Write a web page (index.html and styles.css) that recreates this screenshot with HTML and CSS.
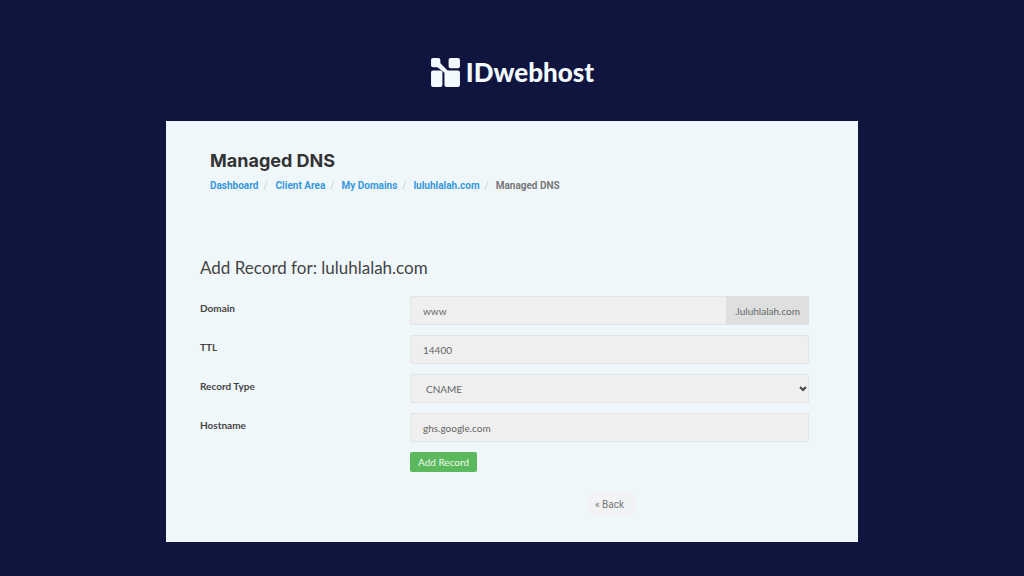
FILE: index.html
```html
<!DOCTYPE html>
<html lang="en">
<head>
<meta charset="utf-8">
<meta name="viewport" content="width=device-width, initial-scale=1">
<title>Managed DNS - IDwebhost</title>
<link rel="stylesheet" href="styles.css">
</head>
<body>
<header class="brand">
  <svg class="brand-mark" viewBox="0 0 30 30" aria-hidden="true">
    <rect x="1" y="1" width="9" height="9" rx="2"/>
    <rect x="18" y="1" width="11" height="10" rx="2"/>
    <rect x="1" y="13" width="11" height="16" rx="2"/>
    <rect x="14" y="13" width="15" height="16" rx="2"/>
    <path d="M6 9l3-4 9 9-3 2z"/>
  </svg>
  <span class="brand-name">IDwebhost</span>
</header>
<main class="panel">
  <div class="heading">
    <h1 class="title">Managed DNS</h1>
    <nav aria-label="Breadcrumb">
      <ol class="crumbs">
        <li><a href="#">Dashboard</a></li>
        <li><a href="#">Client Area</a></li>
        <li><a href="#">My Domains</a></li>
        <li><a href="#">luluhlalah.com</a></li>
        <li aria-current="page">Managed DNS</li>
      </ol>
    </nav>
  </div>
  <h2 class="subtitle">Add Record for: luluhlalah.com</h2>
  <form class="record-form">
    <div class="row">
      <label for="domain">Domain</label>
      <div class="group">
        <input class="field" id="domain" type="text" value="www">
        <span class="suffix">.luluhlalah.com</span>
      </div>
    </div>
    <div class="row">
      <label for="ttl">TTL</label>
      <input class="field" id="ttl" type="text" value="14400">
    </div>
    <div class="row">
      <label for="type">Record Type</label>
      <div class="select-wrap">
        <select class="field" id="type"><option>CNAME</option></select>
        <svg class="chevron" viewBox="0 0 8 6" aria-hidden="true"><path d="M1 1l3 3 3-3"/></svg>
      </div>
    </div>
    <div class="row">
      <label for="host">Hostname</label>
      <input class="field" id="host" type="text" value="ghs.google.com">
    </div>
    <div class="submit"><button class="add" type="submit">Add Record</button></div>
    <div class="actions"><button class="back" type="button">« Back</button></div>
  </form>
</main>
</body>
</html>
```
FILE: styles.css
```css
* {
  box-sizing: border-box;
}

body {
  margin: 0;
  min-height: 100vh;
  padding: 57px 16px 34px;
  background: #101540;
  color: #444;
  font-family: Lato, sans-serif;
  font-size: 10px;
}

.brand {
  display: flex;
  align-items: center;
  justify-content: center;
  gap: 5px;
  height: 30px;
  margin-bottom: 34px;
  color: #f3fafd;
}

.brand-mark {
  width: 31px;
  height: 31px;
  fill: #f3fafd;
}

.brand-name {
  font-size: 26px;
  font-weight: 900;
  line-height: 30px;
}

.panel {
  max-width: 692px;
  margin: 0 auto;
  padding: 28px 49px 26px 34px;
  background: #f0f7fb;
}

.heading {
  padding-left: 10px;
}

.title {
  margin: 0 0 6px;
  color: #333;
  font-family: Inter, sans-serif;
  font-size: 18px;
  font-weight: 700;
  line-height: 23px;
}

.crumbs {
  display: flex;
  flex-wrap: wrap;
  margin: 0;
  padding: 0;
  list-style: none;
  color: #777;
  font-family: Roboto, sans-serif;
  font-weight: 700;
  line-height: 16px;
}

.crumbs li + li::before {
  content: "/";
  padding: 0 8px 0 5px;
  color: #ccc;
  font-weight: 400;
}

.crumbs li:nth-child(n + 3)::before {
  padding-right: 7px;
}

.crumbs a {
  color: #3798dc;
  text-decoration: none;
}

.subtitle {
  margin: 64px 0 18px;
  font-size: 17px;
  font-weight: 400;
  line-height: 20px;
}

.record-form {
  display: flex;
  flex-direction: column;
  gap: 10px;
}

.row {
  display: grid;
  grid-template-columns: 210px 1fr;
}

.row label {
  padding-top: 6px;
  font-weight: 700;
  line-height: 13px;
}

.group {
  display: flex;
}

.select-wrap {
  position: relative;
}

.field {
  display: block;
  width: 100%;
  min-width: 0;
  height: 29px;
  padding: 0 12px;
  border: 1px solid #e2e5e6;
  border-radius: 2px;
  background: #efefef;
  color: #666;
  font: inherit;
  appearance: none;
}

select.field {
  padding-left: 15px;
}

.group .field {
  flex: 1;
  border-right: 0;
  border-radius: 2px 0 0 2px;
}

.suffix {
  display: flex;
  align-items: center;
  padding: 0 9px;
  background: #dedfdf;
  color: #666;
}

.chevron {
  position: absolute;
  top: 12px;
  right: 2px;
  width: 8px;
  height: 6px;
  fill: none;
  stroke: #444;
  stroke-width: 2;
  pointer-events: none;
}

.submit {
  padding-left: 210px;
}

.add {
  display: block;
  height: 20px;
  padding: 0 8px;
  border: 0;
  border-radius: 2px;
  background: #5cb85c;
  color: #eefaee;
  font: inherit;
}

.actions {
  display: flex;
  justify-content: center;
  padding: 10px 0 0 215px;
}

.back {
  height: 24px;
  padding: 0 12px 0 7px;
  border: 0;
  border-radius: 2px;
  background: #f1f3f5;
  color: #777;
  font-family: Roboto, sans-serif;
  font-size: 10px;
}
```
